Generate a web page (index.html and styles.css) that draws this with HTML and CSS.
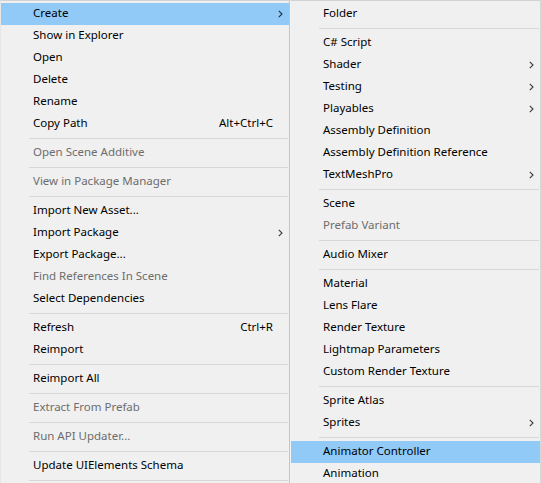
FILE: index.html
```html
<!DOCTYPE html>
<html>
<head>
<meta charset="utf-8">
<link rel="stylesheet" href="styles.css">
</head>
<body>
<div class="desk">
  <div class="menu menu-left">
    <div class="item active"><span class="label">Create</span><span class="key"></span><span class="sub"><svg width="5" height="8" viewBox="0 0 5 8"><polyline points="0.8,0.8 4,4 0.8,7.2"/></svg></span></div>
    <div class="item"><span class="label">Show in Explorer</span><span class="key"></span><span class="sub"></span></div>
    <div class="item"><span class="label">Open</span><span class="key"></span><span class="sub"></span></div>
    <div class="item"><span class="label">Delete</span><span class="key"></span><span class="sub"></span></div>
    <div class="item"><span class="label">Rename</span><span class="key"></span><span class="sub"></span></div>
    <div class="item"><span class="label">Copy Path</span><span class="key">Alt+Ctrl+C</span><span class="sub"></span></div>
    <div class="sep"></div>
    <div class="item disabled"><span class="label">Open Scene Additive</span><span class="key"></span><span class="sub"></span></div>
    <div class="sep"></div>
    <div class="item disabled"><span class="label">View in Package Manager</span><span class="key"></span><span class="sub"></span></div>
    <div class="sep"></div>
    <div class="item"><span class="label">Import New Asset...</span><span class="key"></span><span class="sub"></span></div>
    <div class="item"><span class="label">Import Package</span><span class="key"></span><span class="sub"><svg width="5" height="8" viewBox="0 0 5 8"><polyline points="0.8,0.8 4,4 0.8,7.2"/></svg></span></div>
    <div class="item"><span class="label">Export Package...</span><span class="key"></span><span class="sub"></span></div>
    <div class="item disabled"><span class="label">Find References In Scene</span><span class="key"></span><span class="sub"></span></div>
    <div class="item"><span class="label">Select Dependencies</span><span class="key"></span><span class="sub"></span></div>
    <div class="sep"></div>
    <div class="item"><span class="label">Refresh</span><span class="key">Ctrl+R</span><span class="sub"></span></div>
    <div class="item"><span class="label">Reimport</span><span class="key"></span><span class="sub"></span></div>
    <div class="sep"></div>
    <div class="item"><span class="label">Reimport All</span><span class="key"></span><span class="sub"></span></div>
    <div class="sep"></div>
    <div class="item disabled"><span class="label">Extract From Prefab</span><span class="key"></span><span class="sub"></span></div>
    <div class="sep"></div>
    <div class="item disabled"><span class="label">Run API Updater...</span><span class="key"></span><span class="sub"></span></div>
    <div class="sep"></div>
    <div class="item"><span class="label">Update UIElements Schema</span><span class="key"></span><span class="sub"></span></div>
    <div class="sep"></div>
  </div>
  <div class="menu menu-right">
    <div class="item"><span class="label">Folder</span><span class="key"></span><span class="sub"></span></div>
    <div class="sep"></div>
    <div class="item"><span class="label">C# Script</span><span class="key"></span><span class="sub"></span></div>
    <div class="item"><span class="label">Shader</span><span class="key"></span><span class="sub"><svg width="5" height="8" viewBox="0 0 5 8"><polyline points="0.8,0.8 4,4 0.8,7.2"/></svg></span></div>
    <div class="item"><span class="label">Testing</span><span class="key"></span><span class="sub"><svg width="5" height="8" viewBox="0 0 5 8"><polyline points="0.8,0.8 4,4 0.8,7.2"/></svg></span></div>
    <div class="item"><span class="label">Playables</span><span class="key"></span><span class="sub"><svg width="5" height="8" viewBox="0 0 5 8"><polyline points="0.8,0.8 4,4 0.8,7.2"/></svg></span></div>
    <div class="item"><span class="label">Assembly Definition</span><span class="key"></span><span class="sub"></span></div>
    <div class="item"><span class="label">Assembly Definition Reference</span><span class="key"></span><span class="sub"></span></div>
    <div class="item"><span class="label">TextMeshPro</span><span class="key"></span><span class="sub"><svg width="5" height="8" viewBox="0 0 5 8"><polyline points="0.8,0.8 4,4 0.8,7.2"/></svg></span></div>
    <div class="sep"></div>
    <div class="item"><span class="label">Scene</span><span class="key"></span><span class="sub"></span></div>
    <div class="item disabled"><span class="label">Prefab Variant</span><span class="key"></span><span class="sub"></span></div>
    <div class="sep"></div>
    <div class="item"><span class="label">Audio Mixer</span><span class="key"></span><span class="sub"></span></div>
    <div class="sep"></div>
    <div class="item"><span class="label">Material</span><span class="key"></span><span class="sub"></span></div>
    <div class="item"><span class="label">Lens Flare</span><span class="key"></span><span class="sub"></span></div>
    <div class="item"><span class="label">Render Texture</span><span class="key"></span><span class="sub"></span></div>
    <div class="item"><span class="label">Lightmap Parameters</span><span class="key"></span><span class="sub"></span></div>
    <div class="item"><span class="label">Custom Render Texture</span><span class="key"></span><span class="sub"></span></div>
    <div class="sep"></div>
    <div class="item"><span class="label">Sprite Atlas</span><span class="key"></span><span class="sub"></span></div>
    <div class="item"><span class="label">Sprites</span><span class="key"></span><span class="sub"><svg width="5" height="8" viewBox="0 0 5 8"><polyline points="0.8,0.8 4,4 0.8,7.2"/></svg></span></div>
    <div class="sep"></div>
    <div class="item active"><span class="label">Animator Controller</span><span class="key"></span><span class="sub"></span></div>
    <div class="item"><span class="label">Animation</span><span class="key"></span><span class="sub"></span></div>
  </div>
</div>
</body>
</html>
```

FILE: styles.css
```css
html, body {
  margin: 0;
  padding: 0;
  background: #f0f0f0;
  overflow: hidden;
}

.desk {
  display: flex;
  align-items: flex-start;
  width: 541px;
  height: 483px;
  overflow: hidden;
  font-family: "Noto Sans", "Open Sans", sans-serif;
  font-size: 11.5px;
  color: #000;
}

.menu {
  display: flex;
  flex-direction: column;
  background: #f0f0f0;
  border-top: 1px solid #d2d2d2;
  padding-top: 2px;
  flex-shrink: 0;
}

.menu-left {
  width: 288px;
  border-left: 1px solid #e6e6e6;
  border-right: 1px solid #c4c4c4;
}

.menu-right {
  width: 249px;
  border-left: 1px solid #f4f4f4;
  border-right: 1px solid #d8d8d8;
}

.item {
  display: flex;
  align-items: center;
  height: 22px;
  box-sizing: border-box;
  padding-left: 32px;
  padding-bottom: 2px;
  white-space: nowrap;
  line-height: 20px;
}

.item.active {
  background: #91c9f7;
}

.item.disabled {
  color: #6d6d6d;
}

.label {
  flex: 1;
}

.key {
  text-align: right;
}

.sub {
  width: 16px;
  height: 20px;
  display: flex;
  align-items: center;
  justify-content: flex-start;
  padding-left: 5px;
  padding-top: 2px;
  box-sizing: border-box;
}

.sub svg {
  display: block;
  fill: none;
  stroke: #3c3c3c;
  stroke-width: 1.1;
}

.item.active .sub svg {
  stroke: #1c2c44;
}

.sep {
  height: 1px;
  margin: 3px 1px 3px 28px;
  background: #d7d7d7;
}
```
